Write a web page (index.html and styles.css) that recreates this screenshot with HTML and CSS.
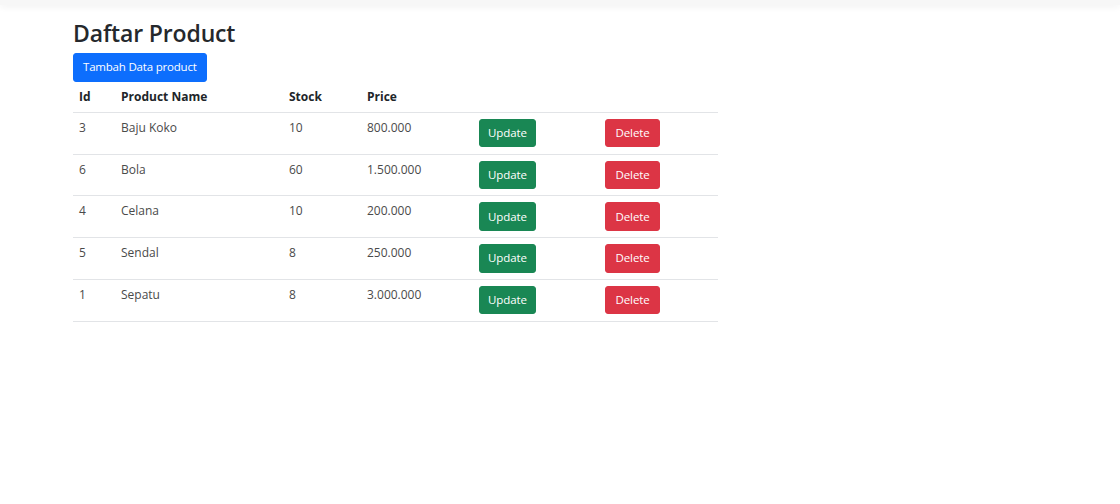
FILE: index.html
```html
<!DOCTYPE html>
<html lang="id">
<head>
<meta charset="utf-8">
<title>Daftar Product</title>
<link rel="stylesheet" href="styles.css">
</head>
<body>
<nav class="topbar"></nav>
<main class="container">
  <h1 class="title">Daftar Product</h1>
  <button class="btn btn-primary btn-add">Tambah Data product</button>
  <table class="table">
    <thead>
      <tr>
        <th class="c-id">Id</th>
        <th class="c-name">Product Name</th>
        <th class="c-stock">Stock</th>
        <th class="c-price">Price</th>
        <th class="c-upd"></th>
        <th class="c-del"></th>
      </tr>
    </thead>
    <tbody>
      <tr><td>3</td><td>Baju Koko</td><td>10</td><td>800.000</td><td><button class="btn btn-success">Update</button></td><td><button class="btn btn-danger">Delete</button></td></tr>
      <tr><td>6</td><td>Bola</td><td>60</td><td>1.500.000</td><td><button class="btn btn-success">Update</button></td><td><button class="btn btn-danger">Delete</button></td></tr>
      <tr><td>4</td><td>Celana</td><td>10</td><td>200.000</td><td><button class="btn btn-success">Update</button></td><td><button class="btn btn-danger">Delete</button></td></tr>
      <tr><td>5</td><td>Sendal</td><td>8</td><td>250.000</td><td><button class="btn btn-success">Update</button></td><td><button class="btn btn-danger">Delete</button></td></tr>
      <tr><td>1</td><td>Sepatu</td><td>8</td><td>3.000.000</td><td><button class="btn btn-success">Update</button></td><td><button class="btn btn-danger">Delete</button></td></tr>
    </tbody>
  </table>
</main>
</body>
</html>
```

FILE: styles.css
```css
* { box-sizing: border-box; }
html, body { margin: 0; padding: 0; background: #fff; }
body {
  font-family: "Open Sans", "Noto Sans", "Liberation Sans", sans-serif;
  font-size: 12px;
  line-height: 18px;
  color: #212529;
}
.topbar {
  height: 5px;
  background: #f7f7f7;
  box-shadow: 0 2px 6px rgba(0,0,0,0.06);
}
.container {
  padding-left: 73px;
  width: 718px;
  box-sizing: content-box;
}
.title {
  margin: 13px 0 5px;
  font-size: 23px;
  line-height: 30px;
  font-weight: 600;
  letter-spacing: -0.15px;
  color: #25282c;
}
.btn {
  display: inline-block;
  font-family: inherit;
  font-size: 11.5px;
  line-height: 18px;
  padding: 4.25px 8px;
  border: 1px solid transparent;
  border-radius: 3px;
  color: #fff;
  cursor: pointer;
  letter-spacing: -0.1px;
}
.btn-add { padding-left: 9px; padding-right: 9px; letter-spacing: -0.2px; }
.btn-primary { background: #0d6efd; border-color: #0d6efd; }
.btn-success { background: #198754; border-color: #198754; }
.btn-danger { background: #dc3545; border-color: #dc3545; padding-left: 9.5px; padding-right: 9.5px; }
.table {
  width: 645px;
  border-collapse: collapse;
  margin-top: 0;
}
.table th, .table td {
  text-align: left;
  vertical-align: top;
  padding: 6px 6px 6.25px;
  border-bottom: 1px solid #e2e4e7;
}
.table th { font-weight: 700; color: #212529; }
.table td { color: #4a4a4a; }
.c-id { width: 42px; }
.c-name { width: 168px; }
.c-stock { width: 78px; }
.c-price { width: 112px; }
.c-upd { width: 126px; }
.c-del { width: 119px; }
```
